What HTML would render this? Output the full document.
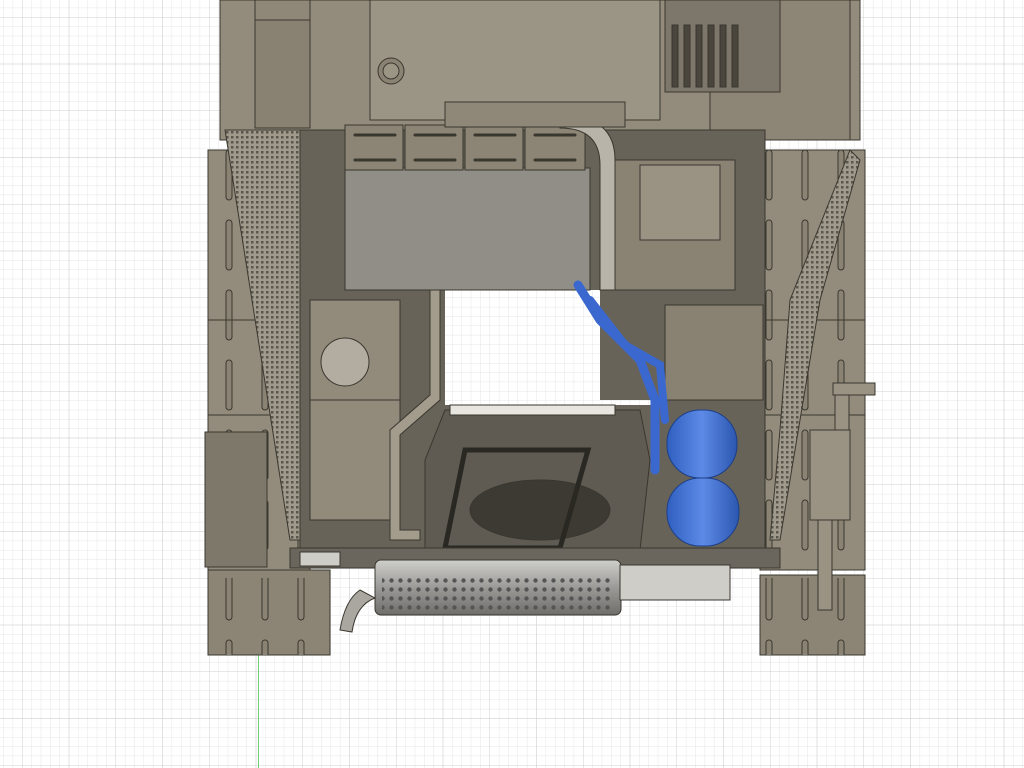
<!DOCTYPE html>
<html><head><style>
html,body{margin:0;padding:0;background:#fff;width:1024px;height:768px;overflow:hidden}
svg{display:block}
</style></head><body>
<svg width="1024" height="768" viewBox="0 0 1024 768" xmlns="http://www.w3.org/2000/svg">
<defs>
<pattern id="minor" width="9.35" height="9.35" patternUnits="userSpaceOnUse" x="22" y="17">
<path d="M0 0H9.35M0 0V9.35" stroke="#e6e6e6" stroke-width="1" fill="none"/></pattern>
<pattern id="major" width="46.75" height="46.75" patternUnits="userSpaceOnUse" x="22" y="17">
<path d="M0 0H46.75M0 0V46.75" stroke="#d0d0d0" stroke-width="1" fill="none"/></pattern>
<pattern id="holes" width="9" height="9" patternUnits="userSpaceOnUse">
<circle cx="4.5" cy="4.5" r="2.2" fill="#555"/></pattern>
<pattern id="mesh" width="5" height="5" patternUnits="userSpaceOnUse">
<rect width="5" height="5" fill="#a09a8c"/><rect x="1" y="1" width="2.5" height="2.5" fill="#5a564c"/></pattern>
<pattern id="slots" width="36" height="70" patternUnits="userSpaceOnUse" x="214" y="0">
<rect x="12" y="10" width="6" height="50" rx="3" fill="#8a8373" stroke="#3a372f"/></pattern>
<linearGradient id="blue" x1="0" x2="1"><stop offset="0" stop-color="#2f5fc0"/><stop offset=".5" stop-color="#5d8ae6"/><stop offset="1" stop-color="#2c57b0"/></linearGradient>
<linearGradient id="muf" x1="0" y1="0" x2="0" y2="1"><stop offset="0" stop-color="#cfcfcc"/><stop offset=".5" stop-color="#9b9a96"/><stop offset="1" stop-color="#6f6e6a"/></linearGradient>
</defs>
<rect width="1024" height="768" fill="url(#minor)"/>
<rect width="1024" height="768" fill="url(#major)"/>
<line x1="258.5" y1="655" x2="258.5" y2="768" stroke="#6fd06f"/>
<g stroke="#3a372f" stroke-width="1">
<rect x="220" y="0" width="640" height="140" fill="#938c7d"/>
<rect x="255" y="0" width="55" height="128" fill="#8f8879"/>
<rect x="255" y="20" width="55" height="108" fill="#898273"/>
<rect x="370" y="0" width="290" height="120" fill="#9b9586"/>
<rect x="710" y="0" width="140" height="140" fill="#8d8676"/>
<circle cx="391" cy="71" r="13" fill="#8a8373"/><circle cx="391" cy="71" r="8" fill="#9b9586"/>
<rect x="665" y="0" width="115" height="92" fill="#7d776b"/>
<g fill="#4a463e"><rect x="672" y="25" width="6" height="62"/><rect x="684" y="25" width="6" height="62"/><rect x="696" y="25" width="6" height="62"/><rect x="708" y="25" width="6" height="62"/><rect x="720" y="25" width="6" height="62"/><rect x="732" y="25" width="6" height="62"/></g>
<rect x="208" y="150" width="102" height="420" fill="#938c7d"/>
<rect x="760" y="150" width="105" height="420" fill="#938c7d"/>
<rect x="208" y="570" width="122" height="85" fill="#8c8575"/>
<rect x="760" y="575" width="105" height="80" fill="#8c8575"/>
<rect x="208" y="150" width="102" height="420" fill="url(#slots)" stroke="none"/>
<rect x="760" y="150" width="105" height="420" fill="url(#slots)" stroke="none"/>
<rect x="208" y="578" width="122" height="77" fill="url(#slots)" stroke="none"/>
<rect x="760" y="578" width="105" height="77" fill="url(#slots)" stroke="none"/>
<line x1="208" y1="320" x2="310" y2="320"/><line x1="208" y1="415" x2="310" y2="415"/>
<line x1="760" y1="320" x2="865" y2="320"/><line x1="760" y1="415" x2="865" y2="415"/>
<rect x="205" y="432" width="62" height="135" fill="#7e786a"/>
<polygon points="225,130 310,130 310,300 300,540 290,540" fill="url(#mesh)"/>
<polygon points="850,150 790,300 780,430 770,540 780,540 820,300 860,160" fill="url(#mesh)"/>
<rect x="300" y="130" width="465" height="420" fill="#676359"/>
<rect x="310" y="300" width="90" height="220" fill="#928b7c"/>
<line x1="310" y1="400" x2="400" y2="400"/>
<circle cx="345" cy="362" r="24" fill="#b3ada1"/>
<rect x="600" y="160" width="135" height="130" fill="#8a8374"/>
<rect x="640" y="165" width="80" height="75" fill="#9a9384"/>
<rect x="665" y="305" width="98" height="95" fill="#898272"/>
<path d="M445 290H600V400H665V405H445Z" fill="#fff" stroke="none"/>
<path d="M445 290H600V400H665V405H445Z" fill="url(#minor)" stroke="none"/>
<rect x="345" y="168" width="245" height="122" fill="#908e87"/>
<g fill="#8c8576"><rect x="345" y="125" width="58" height="45"/><rect x="405" y="125" width="58" height="45"/><rect x="465" y="125" width="58" height="45"/><rect x="525" y="125" width="60" height="45"/></g>
<g stroke="#3a372f" stroke-width="3" stroke-linecap="round"><line x1="355" y1="160" x2="395" y2="160"/><line x1="415" y1="160" x2="455" y2="160"/><line x1="475" y1="160" x2="515" y2="160"/><line x1="535" y1="160" x2="575" y2="160"/>
<line x1="355" y1="135" x2="395" y2="135"/><line x1="415" y1="135" x2="455" y2="135"/><line x1="475" y1="135" x2="515" y2="135"/><line x1="535" y1="135" x2="575" y2="135"/></g>
<path d="M560 115 Q615 115 615 160 V290 H600 V165 Q600 128 560 128Z" fill="#b8b4aa"/>
<rect x="445" y="102" width="180" height="25" fill="#8f8879"/>
<path d="M430 290 V395 L390 430 V540 H420 V530 H400 V435 L440 400 V290Z" fill="#a39c8d"/>
<polygon points="445,410 640,410 650,460 640,550 425,550 425,460" fill="#5f5b52"/>
<rect x="450" y="405" width="165" height="10" fill="#e8e6e0"/>
<ellipse cx="540" cy="510" rx="70" ry="30" fill="#3d3a34"/>
<polygon points="465,450 588,450 560,548 445,548" fill="none" stroke="#2a2822" stroke-width="5"/>
<rect x="290" y="548" width="490" height="20" fill="#6a665d"/>
<rect x="375" y="560" width="246" height="55" rx="6" fill="url(#muf)"/>
<rect x="382" y="575" width="230" height="38" fill="url(#holes)" stroke="none"/>
<path d="M360 590 Q345 600 340 630 L352 632 Q356 605 375 598Z" fill="#aaa7a0"/>
<rect x="620" y="565" width="110" height="35" fill="#cfcdc8"/>
<rect x="300" y="552" width="40" height="14" fill="#cfcdc8"/>
</g>
<g stroke="#1d3f88" stroke-width="1">
<path d="M578 285 L600 320 L640 360 L655 400 L655 470" fill="none" stroke="#3a68cf" stroke-width="9" stroke-linecap="round"/>
<path d="M590 300 L625 345 L660 365 L665 420" fill="none" stroke="#3a68cf" stroke-width="8" stroke-linecap="round"/>
<rect x="667" y="410" width="70" height="68" rx="33" fill="url(#blue)"/>
<rect x="667" y="478" width="72" height="68" rx="33" fill="url(#blue)"/>
</g>
<g stroke="#3a372f" fill="#9a9384">
<rect x="833" y="383" width="42" height="12"/>
<rect x="835" y="395" width="14" height="45"/>
<rect x="810" y="430" width="40" height="90"/>
<rect x="818" y="520" width="14" height="90"/>
</g>
</svg>
</body></html>
